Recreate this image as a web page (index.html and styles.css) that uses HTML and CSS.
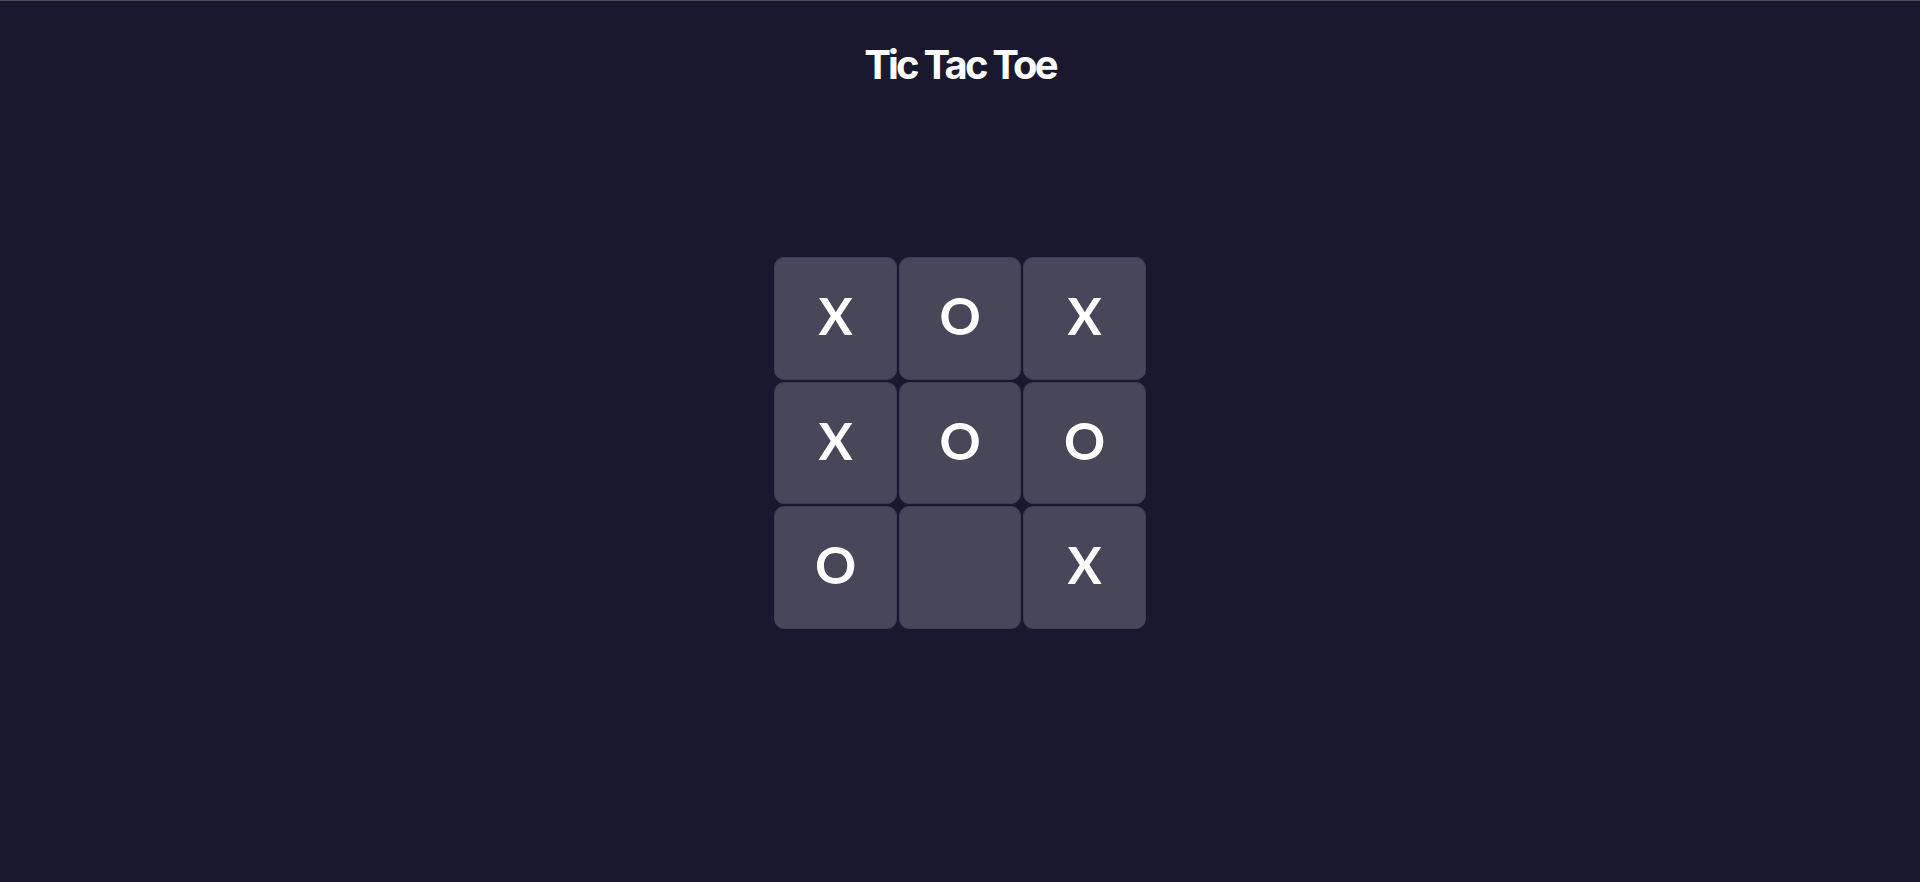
FILE: index.html
```
<!DOCTYPE html>
<html>
<head>
<meta charset="utf-8">
<title>Tic Tac Toe</title>
<link rel="stylesheet" href="styles.css">
</head>
<body>
<main class="app">
  <h1 class="title">Tic Tac Toe</h1>
  <div class="board">
    <button class="cell">X</button>
    <button class="cell">O</button>
    <button class="cell">X</button>
    <button class="cell">X</button>
    <button class="cell">O</button>
    <button class="cell">O</button>
    <button class="cell">O</button>
    <button class="cell"></button>
    <button class="cell">X</button>
  </div>
</main>
</body>
</html>
```
FILE: styles.css
```
html, body {
  margin: 0;
  padding: 0;
  height: 100%;
}
body {
  background: #1a182e;
  border-top: 1px solid #4f4e55;
  box-sizing: border-box;
  font-family: Inter, "Liberation Sans", sans-serif;
  color: #ffffff;
}
.app {
  display: flex;
  flex-direction: column;
  align-items: center;
}
.title {
  margin: 0;
  padding-top: 40px;
  font-size: 40px;
  line-height: 48px;
  font-weight: 700;
  letter-spacing: -2.8px;
}
.board {
  margin-top: 168px;
  display: grid;
  grid-template-columns: repeat(3, 122.5px);
  grid-auto-rows: 122.5px;
  gap: 2px;
}
.cell {
  border: 1px solid #3f3d52;
  border-radius: 10px;
  background: #484659;
  color: #ffffff;
  font-family: Lato, "Open Sans", sans-serif;
  font-size: 51px;
  font-weight: 700;
  display: flex;
  align-items: center;
  justify-content: center;
  padding: 0 0 5px 0;
}
```
